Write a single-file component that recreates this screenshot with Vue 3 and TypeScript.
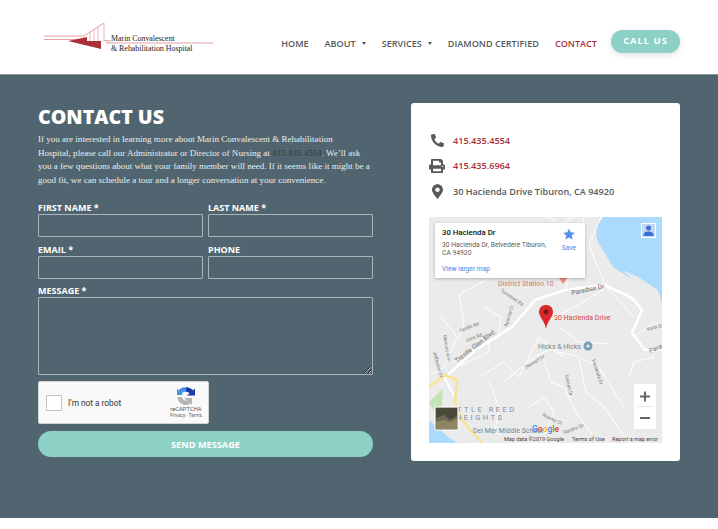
<script setup lang="ts">
const navItems: { label: string; caret?: boolean; active?: boolean }[] = [
  { label: 'HOME' },
  { label: 'ABOUT', caret: true },
  { label: 'SERVICES', caret: true },
  { label: 'DIAMOND CERTIFIED' },
  { label: 'CONTACT', active: true },
]
const roads: string[] = [
  'M70 36 L62 60 L30 78 L35 105 L30 122',
  'M2 158 L15 150 L28 120 L12 100',
  'M25 145 L70 118 L72 100 L55 90',
  'M28 150 L60 135 L60 125',
  'M50 160 L75 145 L90 160 L110 120 L130 135 L150 140 L170 150 L185 175 L195 190',
  'M75 165 L105 140 L122 132 L136 140',
  'M115 145 L122 165 L135 170 L150 200 L165 220',
  'M60 165 L70 190 L66 215 L90 226',
  'M100 190 L115 180 L125 195 L115 220 L130 226',
  'M150 142 L157 175 L175 190 L200 226',
  'M136 73 L150 30 L155 0',
  'M126 100 L150 88 L175 72',
  'M130 110 L150 125 L180 127',
  'M176 68 L205 100',
  'M120 0 L130 8 L145 0',
  'M205 120 L225 105 L233 108',
  'M225 140 L205 145 L200 160',
  'M172 0 L160 28 L175 65',
]
</script>

<template>
  <div class="page">
    <header class="top">
      <svg class="logo" width="172" height="32" viewBox="0 0 172 32" aria-label="Marin Convalescent &amp; Rehabilitation Hospital">
        <g fill="none" stroke="#dfa3a6">
          <path d="M0 13H40L60 0M0 16.500H37" stroke-width="1" />
          <path d="M60 0V19M46 9V18M50 7V18M54 4.500V18M60 17.500H66M63 17V20M66 17V20" stroke-width=".8" />
          <path d="M62 20H169" stroke-width="1" />
        </g>
        <path d="M24 18 L43 14 L43 18 L57 18 L57 26 Z" fill="#ac3038" />
        <text x="67" y="17.500" class="logo-text">Marin Convalescent</text>
        <text x="67" y="27.500" class="logo-text">&amp; Rehabilitation Hospital</text>
      </svg>
      <nav class="nav">
        <a v-for="item in navItems" :key="item.label" class="nav-item" :class="{ active: item.active }">
          {{ item.label }}<i v-if="item.caret" class="caret"></i>
        </a>
        <a class="call">CALL US</a>
      </nav>
    </header>

    <main class="contact">
      <section class="form-col">
        <h1>CONTACT US</h1>
        <p class="intro">
          If you are interested in learning more about Marin Convalescent &amp; Rehabilitation<br />Hospital, please call our Administrator or Director of Nursing at <span class="dark">415.435.4554</span>. We’ll ask<br />you a few questions about what your family member will need. If it seems like it might be a<br />good fit, we can schedule a tour and a longer conversation at your convenience.
        </p>
        <form class="form" @submit.prevent>
          <div class="grid">
            <label class="field"><span>FIRST NAME *</span><input type="text" /></label>
            <label class="field"><span>LAST NAME *</span><input type="text" /></label>
            <label class="field"><span>EMAIL *</span><input type="text" /></label>
            <label class="field"><span>PHONE</span><input type="text" /></label>
          </div>
          <label class="field"><span>MESSAGE *</span><textarea></textarea></label>
          <div class="captcha">
            <i class="check"></i>
            <span class="robot">I'm not a robot</span>
            <div class="cap-brand">
              <svg width="18" height="18" viewBox="0 0 18 18">
                <path d="M2 7A7 7 0 0 1 9 2.500" fill="none" stroke="#4a90e2" stroke-width="4.500" />
                <path d="M0 1.500L6 8H0Z" fill="#4a90e2" />
                <path d="M9 2.500A7 7 0 0 1 15 6" fill="none" stroke="#1c3aa9" stroke-width="4.500" />
                <path d="M10 8.500H18V1.500Z" fill="#1c3aa9" />
                <path d="M2.500 10A6.500 6.500 0 0 0 12 15" fill="none" stroke="#b5b5b5" stroke-width="4.500" />
                <path d="M7 11H15V18Z" fill="#b5b5b5" />
              </svg>
              <b>reCAPTCHA</b>
              <small>Privacy · Terms</small>
            </div>
          </div>
          <button class="send" type="submit">SEND MESSAGE</button>
        </form>
      </section>

      <aside class="card">
        <ul class="info">
          <li>
            <span class="ic"><svg width="13" height="13" viewBox="0 0 512 512"><path transform="matrix(-1 0 0 1 512 0)" d="M493.4 24.6l-104-24c-11.3-2.6-22.9 3.3-27.5 13.9l-48 112c-4.2 9.8-1.4 21.3 6.9 28l60.6 49.6c-36 76.7-98.9 140.5-177.2 177.2l-49.6-60.6c-6.8-8.3-18.2-11.1-28-6.9l-112 48C3.9 366.5-2 378.1.6 389.4l24 104C27.1 504.2 36.7 512 48 512c256.1 0 464-207.5 464-464 0-11.2-7.7-20.9-18.6-23.4z" /></svg></span>
            <a class="red">415.435.4554</a>
          </li>
          <li>
            <span class="ic"><svg width="16" height="14" viewBox="0 0 512 512" preserveAspectRatio="none"><path d="M448 192V77.25c0-8.49-3.37-16.62-9.37-22.63L393.37 9.37c-6-6-14.14-9.37-22.63-9.37H96C78.33 0 64 14.33 64 32v160c-35.35 0-64 28.65-64 64v112c0 8.84 7.16 16 16 16h48v96c0 17.67 14.33 32 32 32h320c17.67 0 32-14.33 32-32v-96h48c8.84 0 16-7.16 16-16V256c0-35.35-28.65-64-64-64zm-64 256H128v-96h256v96zm0-224H128V64h192v48c0 8.84 7.16 16 16 16h48v96zm48 72c-13.25 0-24-10.75-24-24 0-13.26 10.75-24 24-24s24 10.74 24 24c0 13.25-10.75 24-24 24z" /></svg></span>
            <a class="red">415.435.6964</a>
          </li>
          <li>
            <span class="ic"><svg width="11" height="15" viewBox="0 0 384 512"><path d="M172.268 501.67C26.97 291.031 0 255.59 0 192 0 85.961 85.961 0 192 0s192 85.961 192 192c0 63.59-26.97 99.031-172.268 309.67-9.535 13.774-29.93 13.773-39.464 0zM192 272c44.183 0 80-35.817 80-80s-35.817-80-80-80-80 35.817-80 80 35.817 80 80 80z" /></svg></span>
            <span>30 Hacienda Drive Tiburon, CA 94920</span>
          </li>
        </ul>

        <div class="map">
          <svg class="map-svg" width="233" height="226" viewBox="0 0 233 226">
            <rect width="233" height="226" fill="#ebebeb" />
            <path d="M174 0 L167 10 L168 23 L184 50 L204 63 L193 53 L209 60 L229 73 L233 86 V0 Z" fill="#aadafc" />
            <path d="M0 203 L19 220 L29 226 H0 Z" fill="#aadafc" />
            <path d="M0 185 L14 172 L13 190 L5 195 Z" fill="#c4e4b8" />
            <g fill="none" stroke="#fff" stroke-linecap="round" stroke-linejoin="round">
              <path v-for="(d, i) in roads" :key="i" :d="d" stroke-width="1" />
              <path d="M21 156 L46 133 L63 123 L83 110 L106 83 L136 73 L176 68 L203 81 L213 93 L203 116 L216 133 L233 133" stroke-width="2.500" />
              <path d="M21 156 L16 162 L26 180" stroke-width="2" />
            </g>
            <path d="M0 170 L16 158 L28 163 L26 186 L33 203 L53 226" fill="none" stroke="#fde293" stroke-width="2.500" />
            <g class="lbl">
              <text x="69" y="69" class="poi-red">District Station 10</text>
              <path d="M130 61 h8 l-4 6z" fill="#ee8a80" />
              <text x="71" y="74" transform="rotate(35 71 74)">Tunstead Rd</text>
              <text x="78" y="110" transform="rotate(-72 78 110)">Apache Ct</text>
              <text x="31" y="115" transform="rotate(-20 31 115)">Apollo Rd</text>
              <text x="37" y="125" transform="rotate(-20 37 125)">Juno Rd</text>
              <text x="14" y="118" transform="rotate(80 14 118)">Mercury Ave</text>
              <text x="4" y="135" transform="rotate(75 4 135)">Jefferson Dr</text>
              <text x="97" y="152" transform="rotate(-32 97 152)">Stewart Dr</text>
              <text x="136" y="158" transform="rotate(78 136 158)">Garden Dr</text>
              <text x="163" y="143" transform="rotate(72 163 143)">Hacienda Dr</text>
              <text x="113" y="199" transform="rotate(25 113 199)">Rowley Ct</text>
              <text x="135" y="217" transform="rotate(-20 135 217)">Garden Dr</text>
              <text x="218" y="114" transform="rotate(-15 218 114)">Vista Dr</text>
            </g>
            <text x="28" y="146" transform="rotate(-38 28 146)" class="road">Trestle Glen Blvd</text>
            <text x="143" y="78" transform="rotate(-12 143 78)" class="road">Paradise Dr</text>
            <text x="221" y="136" transform="rotate(-22 221 136)" class="road">Parad</text>
            <text x="125" y="103" class="poi-red big">30 Hacienda Drive</text>
            <text x="109" y="132" class="hicks">Hicks &amp; Hicks</text>
            <circle cx="159" cy="129" r="4.500" fill="#7a9fb8" /><circle cx="159" cy="129" r="1.600" fill="#ebebeb" />
            <text x="17" y="195" class="area">LITTLE REED</text>
            <text x="27" y="203" class="area">HEIGHTS</text>
            <text x="44" y="215.500" class="hicks">Del Mar Middle School</text>
            <path d="M117 88 C111 88 110 93 110 95 C110 100 116 104 117 112 C118 104 124 100 124 95 C124 93 123 88 117 88 Z" fill="#d8282a" />
            <circle cx="117" cy="95" r="2.400" fill="#7a1414" />
            <rect x="6" y="190" width="23" height="23" fill="#6e6a52" stroke="#fff" stroke-width="1" />
            <path d="M7 191h21v8l-7 4-6-5-8 3z" fill="#4a4a3a" />
            <path d="M7 205l8-2 6 2 7-3v10H7z" fill="#8d8660" />
            <g class="google">
              <text x="103" y="215"><tspan fill="#4285f4">G</tspan><tspan fill="#ea4335">o</tspan><tspan fill="#fbbc05">o</tspan><tspan fill="#4285f4">g</tspan><tspan fill="#34a853">l</tspan><tspan fill="#ea4335">e</tspan></text>
            </g>
            <g class="attr">
              <rect x="72" y="217" width="161" height="9" fill="#ebebeb" opacity=".7" />
              <text x="75" y="223.500">Map data ©2019 Google</text>
              <text x="143" y="223.500">Terms of Use</text>
              <text x="183" y="223.500">Report a map error</text>
            </g>
            <rect x="205" y="167" width="22" height="45" fill="#fff" />
            <path d="M208 189.500H224" stroke="#e4e4e4" stroke-width="1" />
            <path d="M216 174.500V184.500M211 179.500H221M211 201H221" stroke="#666" stroke-width="2" fill="none" />
            <rect x="212.500" y="6.500" width="14" height="14" fill="#c5d6f5" stroke="#fff" />
            <circle cx="219.500" cy="11" r="2.500" fill="#3f6fd0" />
            <path d="M214.500 19 C214.500 15 217 14.500 219.500 14.500 S224.500 15 224.500 19Z" fill="#3f6fd0" />
          </svg>
          <div class="iw">
            <div class="iw-main">
              <strong>30 Hacienda Dr</strong>
              <p>30 Hacienda Dr, Belvedere Tiburon, CA 94920</p>
            </div>
            <div class="iw-save">
              <svg width="12" height="12" viewBox="0 0 24 24"><path d="M12 1l3.400 7.600 8.100.8-6.100 5.500 1.800 8.100L12 18.800 4.800 23l1.800-8.100L.5 9.400l8.100-.8z" fill="#5b8def" /></svg>
              <span>Save</span>
            </div>
            <a class="iw-link">View larger map</a>
          </div>
        </div>
      </aside>
    </main>
    <div class="foot"></div>
  </div>
</template>

<style scoped>
.page {
  width: 718px;
  height: 529px;
  overflow: hidden;
  background: #fff;
  font-family: "Open Sans", sans-serif;
}
.top {
  height: 74px;
  box-sizing: border-box;
  display: flex;
  justify-content: space-between;
  padding: 21px 38px 0 44px;
  background: #fff;
}
.logo {
  display: block;
  margin-top: 2px;
  flex: none;
}
.logo-text {
  font-family: "Liberation Serif", serif;
  font-size: 7.900px;
  fill: #222;
}
.nav {
  display: flex;
  align-items: flex-start;
  padding-top: 9px;
}
.nav-item {
  margin-top: 7px;
  margin-right: 16px;
  font-size: 9.100px;
  line-height: 13px;
  font-weight: 600;
  color: #55595c;
  white-space: nowrap;
}
.nav-item.active {
  color: #a8323a;
  margin-right: 14px;
}
.caret {
  display: inline-block;
  margin-left: 6px;
  vertical-align: 2px;
  border-left: 2.500px solid transparent;
  border-right: 2.500px solid transparent;
  border-top: 3px solid #55595c;
}
.call {
  width: 69px;
  height: 23px;
  border-radius: 12px;
  background: #8dd0c6;
  color: #fff;
  font-size: 9.400px;
  font-weight: 700;
  letter-spacing: 1px;
  line-height: 22px;
  text-align: center;
  box-shadow: 0 2px 6px rgba(0, 0, 0, .12);
}
.contact {
  height: 444px;
  box-sizing: border-box;
  display: flex;
  justify-content: space-between;
  padding: 28px 38px 0;
  background: #516570;
  border-top: 1px solid #8d979c;
}
.form-col {
  width: 335px;
  flex: none;
}
h1 {
  margin: 0;
  padding-top: 1px;
  font-size: 19.600px;
  line-height: 26px;
  font-weight: 800;
  color: #fff;
}
.intro {
  margin: 3px 0 0;
  font-family: "Liberation Serif", serif;
  font-size: 9.040px;
  line-height: 13.600px;
  color: #e9eded;
  white-space: nowrap;
}
.dark {
  color: #343c40;
}
.form {
  margin-top: 14px;
  display: flex;
  flex-direction: column;
}
.grid {
  display: grid;
  grid-template-columns: 165px 165px;
  column-gap: 5px;
  row-gap: 6px;
  margin-bottom: 5px;
}
.field {
  display: flex;
  flex-direction: column;
}
.field span {
  font-size: 9px;
  line-height: 13px;
  font-weight: 700;
  color: #fff;
}
.field input,
.field textarea {
  box-sizing: border-box;
  display: block;
  width: 100%;
  margin: 0;
  padding: 0;
  background: transparent;
  border: 1px solid #a9b5b9;
  border-radius: 1px;
  outline: none;
}
.field input {
  height: 23px;
}
.field textarea {
  height: 78px;
}
.captcha {
  box-sizing: border-box;
  width: 171px;
  height: 43px;
  margin-top: 6px;
  display: flex;
  align-items: center;
  position: relative;
  padding-left: 7px;
  background: #f9f9f9;
  border: 1px solid #d3d3d3;
  border-radius: 2px;
  font-family: Roboto, sans-serif;
}
.check {
  box-sizing: border-box;
  width: 16px;
  height: 16px;
  background: #fff;
  border: 1px solid #c1c1c1;
  border-radius: 1px;
}
.robot {
  margin-left: 6px;
  font-size: 8.300px;
  color: #333;
}
.cap-brand {
  margin-left: auto;
  width: 40px;
  margin-right: 2px;
  display: flex;
  flex-direction: column;
  align-items: center;
  color: #666;
}
.cap-brand b {
  font-size: 5.800px;
  line-height: 7px;
  margin-top: 1px;
  font-weight: 400;
  color: #555;
}
.cap-brand small {
  font-size: 4.700px;
  line-height: 6px;
}
.send {
  margin-top: 7px;
  height: 26px;
  padding: 0;
  border: 0;
  border-radius: 13px;
  background: #8dd0c6;
  color: #fff;
  font-family: "Open Sans", sans-serif;
  font-size: 9.200px;
  font-weight: 700;
}
.card {
  box-sizing: border-box;
  width: 269px;
  height: 358px;
  padding: 21px 18px 0;
  background: #fff;
  border-radius: 3px;
  flex: none;
}
.info {
  list-style: none;
  margin: 0;
  padding: 0;
  font-size: 9.100px;
  font-weight: 600;
  color: #55595c;
}
.info li {
  display: flex;
  align-items: center;
  height: 25.500px;
  padding-top: 7px;
  box-sizing: border-box;
}
.ic {
  width: 24px;
  flex: none;
  display: flex;
  justify-content: center;
  padding-right: 8px;
  box-sizing: border-box;
}
.ic svg {
  fill: #55595c;
  display: block;
}
.red {
  color: #a8323a;
}
.map {
  position: relative;
  margin-top: 16px;
  width: 233px;
  height: 226px;
  overflow: hidden;
  font-family: Roboto, sans-serif;
}
.map-svg {
  display: block;
}
.lbl text {
  font-size: 4.800px;
  fill: #777;
}
.lbl .poi-red {
  font-size: 7px;
  fill: #c77a76;
}
.road {
  font-size: 6.500px;
  fill: #666;
}
.poi-red.big {
  font-size: 7px;
  fill: #d0473f;
}
.hicks {
  font-size: 7px;
  fill: #74878f;
}
.area {
  font-size: 7.500px;
  letter-spacing: 2.500px;
  fill: #7d8ea8;
}
.google text {
  font-size: 8.500px;
  font-weight: 500;
}
.attr text {
  font-size: 5.500px;
  fill: #444;
}
.iw {
  position: absolute;
  left: 6px;
  top: 6px;
  box-sizing: border-box;
  width: 150px;
  height: 55px;
  padding: 5px 0 5px 7px;
  background: #fff;
  box-shadow: 0 1px 3px rgba(0, 0, 0, .25);
  display: grid;
  grid-template-columns: 1fr 32px;
  grid-template-rows: 1fr auto;
}
.iw-main strong {
  display: block;
  font-size: 7.800px;
  line-height: 10px;
  font-weight: 500;
  color: #111;
}
.iw-main p {
  margin: 3px 0 0;
  font-size: 6.750px;
  line-height: 8px;
  color: #5b5b5b;
}
.iw-save {
  display: flex;
  flex-direction: column;
  align-items: center;
  color: #4a86e8;
  font-size: 6.700px;
  line-height: 8px;
}
.iw-save span {
  margin-top: 4px;
}
.iw-link {
  grid-column: 1 / -1;
  font-size: 6.700px;
  line-height: 8px;
  color: #4a86e8;
}
.foot {
  height: 11px;
  background: #fff;
}
</style>
